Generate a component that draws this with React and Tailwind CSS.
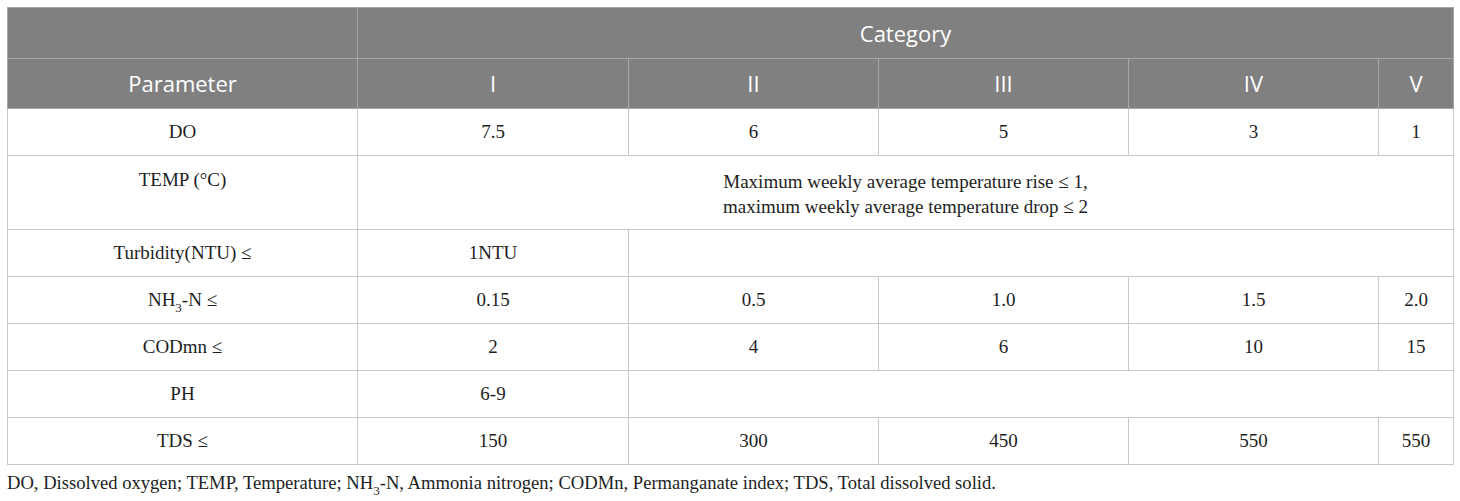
import React from "react";

const serif = { fontFamily: '"Liberation Serif", "Times New Roman", serif' };
const sans = { fontFamily: '"Open Sans", "Liberation Sans", sans-serif' };

const td = "border border-[#c8c8c8] px-2 py-[11px] text-center align-top leading-[24px]";
const th = "border border-[#a6a6a6] px-2 text-center align-middle font-normal text-white";

export default function App() {
  const rows = [
    ["DO", ["7.5", "6", "5", "3", "1"]],
    ["TEMP (°C)", "temp"],
    ["Turbidity(NTU) ≤", ["1NTU", null]],
    [
      <>
        NH<sub className="text-[13px] align-[-3px]">3</sub>-N ≤
      </>,
      ["0.15", "0.5", "1.0", "1.5", "2.0"],
    ],
    ["CODmn ≤", ["2", "4", "6", "10", "15"]],
    ["PH", ["6-9", null]],
    ["TDS ≤", ["150", "300", "450", "550", "550"]],
  ];

  return (
    <div className="bg-white w-[1460px] h-[501px] pt-[7px] pl-[7px]">
      <table className="border-collapse table-fixed w-[1446px] text-[19px] text-[#1e1e1e]" style={serif}>
        <colgroup>
          <col className="w-[350px]" />
          <col className="w-[271px]" />
          <col className="w-[250px]" />
          <col className="w-[250px]" />
          <col className="w-[250px]" />
          <col className="w-[75px]" />
        </colgroup>
        <thead className="bg-[#808080] text-[22px]" style={sans}>
          <tr className="h-[51px]">
            <th className={th}></th>
            <th className={th} colSpan={5}>Category</th>
          </tr>
          <tr className="h-[50px]">
            <th className={th}>Parameter</th>
            <th className={th}>I</th>
            <th className={th}>II</th>
            <th className={th}>III</th>
            <th className={th}>IV</th>
            <th className={th}>V</th>
          </tr>
        </thead>
        <tbody>
          {rows.map(([label, vals], i) => (
            <tr key={i}>
              <td className={vals === "temp" ? "border border-[#c8c8c8] px-2 pt-[12px] text-center align-top leading-[24px]" : td}>{label}</td>
              {vals === "temp" ? (
                <td className="border border-[#c8c8c8] px-2 pt-[13px] pb-[10px] text-center align-top leading-[25px]" colSpan={5}>
                  Maximum weekly average temperature rise ≤ 1,
                  <br />
                  maximum weekly average temperature drop ≤ 2
                </td>
              ) : vals[1] === null ? (
                <>
                  <td className={td}>{vals[0]}</td>
                  <td className={td} colSpan={4}></td>
                </>
              ) : (
                vals.map((v, j) => (
                  <td key={j} className={td}>
                    {v}
                  </td>
                ))
              )}
            </tr>
          ))}
        </tbody>
      </table>
      <p className="text-[18.6px] text-[#1e1e1e] mt-[6px] leading-[24px]" style={serif}>
        DO, Dissolved oxygen; TEMP, Temperature; NH<sub className="text-[13px] align-[-3px]">3</sub>-N, Ammonia nitrogen; CODMn, Permanganate index; TDS, Total dissolved solid.
      </p>
    </div>
  );
}
